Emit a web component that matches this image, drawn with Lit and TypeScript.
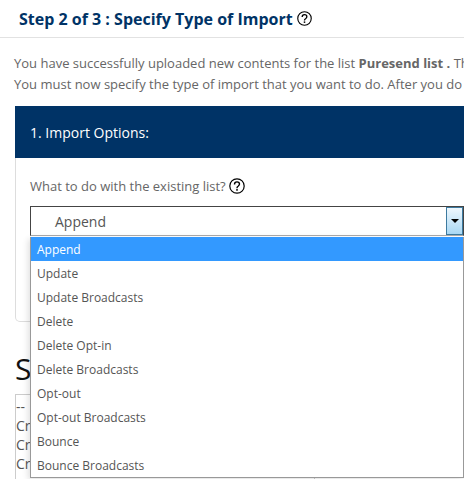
import { LitElement, html, css } from 'lit';
import { customElement } from 'lit/decorators.js';

const OPTIONS = [
  'Append',
  'Update',
  'Update Broadcasts',
  'Delete',
  'Delete Opt-in',
  'Delete Broadcasts',
  'Opt-out',
  'Opt-out Broadcasts',
  'Bounce',
  'Bounce Broadcasts',
];

const help = (size: number) => html`
  <svg class="help" width=${size} height=${size} viewBox="0 0 16 16">
    <circle cx="8" cy="8" r="7.2" fill="none" stroke="#000" stroke-width="1.2"></circle>
    <path d="M5.5 6.4c0-1.5 1.1-2.5 2.5-2.5s2.5.9 2.5 2.2c0 1-.6 1.5-1.4 2.1-.7.5-1.1.9-1.1 1.7v.3" fill="none" stroke="#000" stroke-width="1.4"></path>
    <rect x="7.2" y="11.1" width="1.6" height="1.6" fill="#000"></rect>
  </svg>
`;

@customElement('app-root')
export class AppRoot extends LitElement {
  static styles = css`
    :host {
      display: block;
      width: 464px;
      height: 479px;
      overflow: hidden;
      background: #fff;
      font-family: 'Open Sans', sans-serif;
      color: #666;
      position: relative;
    }
    .head {
      height: 38px;
      box-sizing: border-box;
      border-bottom: 1px solid #e2e2e2;
      padding-left: 19px;
      display: flex;
      align-items: center;
      gap: 4px;
      font-size: 16px;
      font-weight: 700;
      color: #003366;
      white-space: nowrap;
    }
    .help {
      flex: none;
      display: block;
    }
    .intro {
      margin: 0;
      padding: 15px 0 0 14px;
      width: 700px;
      font-size: 13px;
      line-height: 21px;
      white-space: nowrap;
    }
    .intro b {
      font-weight: 700;
    }
    .panel {
      margin: 11px 0 0 15px;
      width: 700px;
      height: 216px;
      box-sizing: border-box;
      border: 1px solid #ddd;
      border-top: none;
      border-radius: 0 0 5px 5px;
    }
    .panel-title {
      height: 52px;
      margin-left: -1px;
      padding: 1px 0 0 15px;
      box-sizing: border-box;
      display: flex;
      align-items: center;
      background: #003366;
      color: #fff;
      font-size: 14px;
    }
    .field {
      padding: 18px 0 0 14px;
    }
    .label {
      display: flex;
      align-items: center;
      gap: 3px;
      height: 20px;
      font-size: 13px;
      color: #666;
    }
    .select {
      position: relative;
      margin-top: 10px;
      width: 434px;
      height: 30px;
      box-sizing: border-box;
      border: 1px solid #444;
      border-bottom-color: #aaa;
      display: flex;
      align-items: center;
      padding-left: 24px;
      font-size: 14px;
      color: #555;
      background: #fff;
    }
    .arrow {
      position: absolute;
      right: 0;
      top: 0;
      bottom: 0;
      width: 17px;
      box-sizing: border-box;
      border: 1px solid #3d7a9f;
      background: linear-gradient(#eef7fd, #a9d8f4);
      display: flex;
      align-items: center;
      justify-content: center;
    }
    .arrow i {
      width: 0;
      height: 0;
      border-left: 4px solid transparent;
      border-right: 4px solid transparent;
      border-top: 4px solid #000;
    }
    .menu {
      position: absolute;
      left: 30px;
      top: 237px;
      width: 434px;
      box-sizing: border-box;
      border: 1px solid #999;
      border-top: none;
      background: #fff;
      box-shadow: -2px 2px 6px rgba(0, 0, 0, 0.12);
      font-size: 12px;
      color: #555;
    }
    .menu div {
      height: 24px;
      padding-left: 6px;
      display: flex;
      align-items: center;
    }
    .menu .active {
      background: #3399ff;
      color: #fff;
    }
    .section {
      margin: 29px 0 0 15px;
      font-size: 30px;
      line-height: 36px;
      color: #111;
    }
    .log {
      margin: 7px 0 0 15px;
      width: 300px;
      height: 100px;
      box-sizing: border-box;
      border: 1px solid #ccc;
      border-bottom: none;
      font-size: 14px;
      line-height: 19px;
      color: #555;
      padding-top: 2px;
    }
  `;

  render() {
    return html`
      <div class="head">Step 2 of 3 : Specify Type of Import ${help(15)}</div>
      <p class="intro">
        You have successfully uploaded new contents for the list <b>Puresend list .</b> The<br />
        You must now specify the type of import that you want to do. After you do
      </p>
      <div class="panel">
        <div class="panel-title">1. Import Options:</div>
        <div class="field">
          <div class="label">What to do with the existing list? ${help(16)}</div>
          <div class="select">
            Append
            <span class="arrow"><i></i></span>
          </div>
        </div>
      </div>
      <div class="section">S</div>
      <div class="log">--<br />Cr<br />Cr<br />Cr</div>
      <div class="menu">
        ${OPTIONS.map((o, i) => html`<div class=${i === 0 ? 'active' : ''}>${o}</div>`)}
      </div>
    `;
  }
}
